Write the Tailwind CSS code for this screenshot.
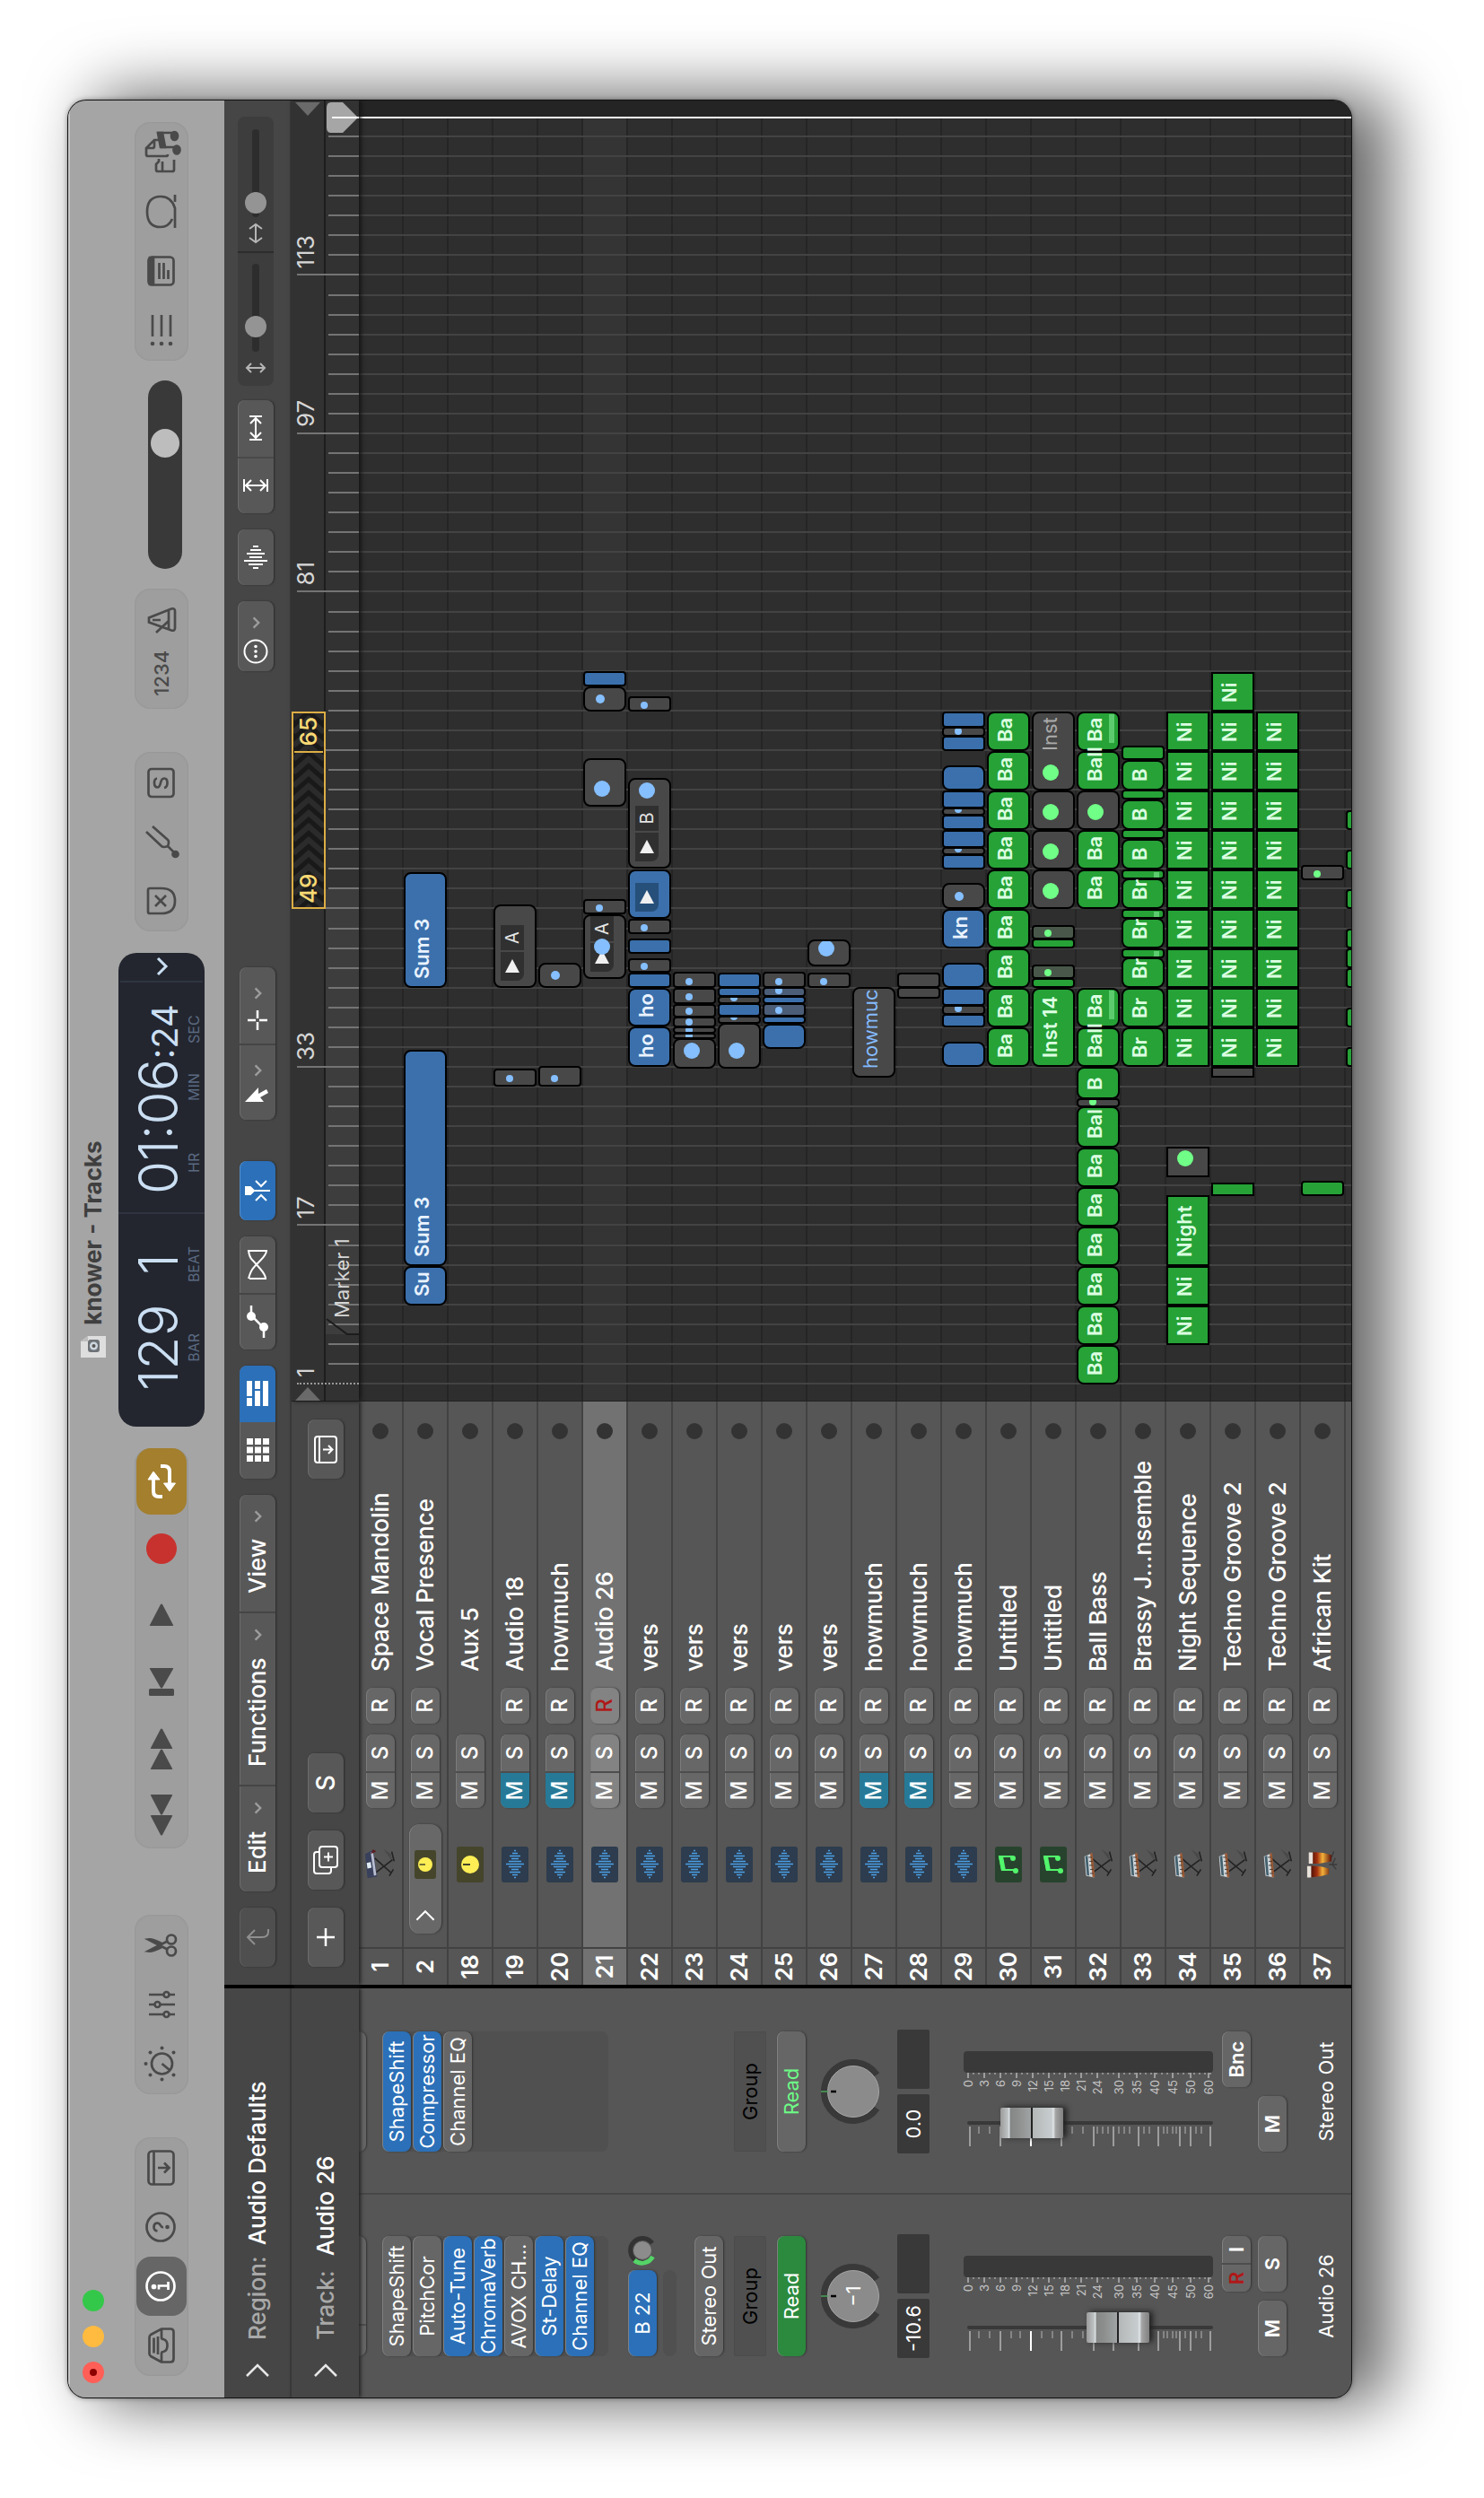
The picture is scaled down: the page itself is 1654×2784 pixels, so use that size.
<!DOCTYPE html>
<html lang="en">
<head>
<meta charset="utf-8">
<title>knower - Tracks</title>
<script src="https://cdn.jsdelivr.net/npm/@tailwindcss/browser@4"></script>
</head>
<body class="bg-white">
<svg class="hidden" aria-hidden="true">
  <defs>
    <g id="i-inbox"><path d="M1.500 20L8 8q1-1.500 3-1.500h18q2 0 3 1.500l6.500 12v10q0 3.500-3.500 3.500H5q-3.500 0-3.500-3.500zM1.500 20H11q2 0 2 2 1 4.500 7 4.500t7-4.500q0-2 2-2h9.500M10 16h20M11.500 11.500h17"/></g>
    <g id="i-info"><circle cx="20" cy="19" r="15.500"/><circle cx="19.500" cy="11.500" r="1.500" fill="currentColor"/><path d="M16.500 17H20.500V27M16 27.500h9"/></g>
    <g id="i-help"><circle cx="20" cy="19" r="15.500"/><path d="M15.500 15.500q.5-4 4.500-4t4.500 3.500q0 2.500-2.500 3.800t-2 3.200"/><circle cx="20" cy="26.500" r="1" fill="currentColor"/></g>
    <g id="i-drawer"><rect x="1.500" y="5.500" width="37" height="28" rx="4"/><path d="M2 11.500h36M20 16v12M14.500 23l5.500 5.500 5.500-5.500"/></g>
    <g id="i-dial"><circle cx="20" cy="20.500" r="11.500"/><path d="M20 20.500L13 29"/><g fill="currentColor" stroke="none"><circle cx="20" cy="2.500" r="2"/><circle cx="7.500" cy="7.500" r="2"/><circle cx="32.500" cy="7.500" r="2"/><circle cx="2.500" cy="20.500" r="2"/><circle cx="37.500" cy="20.500" r="2"/><circle cx="7.500" cy="33.500" r="2"/><circle cx="32.500" cy="33.500" r="2"/></g></g>
    <g id="i-faders"><path d="M9 6v16M9 29v6M20 6v6M20 19v16M31 6v16M31 29v6"/><circle cx="9" cy="25.500" r="3"/><circle cx="20" cy="15.500" r="3"/><circle cx="31" cy="25.500" r="3"/></g>
    <g id="i-scissors"><circle cx="13.500" cy="31" r="5"/><circle cx="26.500" cy="31" r="5"/><path d="M15.500 26.500L26.500 5q.8 5-4.500 15M24.500 26.500L13.500 5q-.8 5 4.500 15"/></g>
    <g id="i-rewind" fill="currentColor" stroke="none"><path d="M19 8q1-1 1 1v22q0 2-1 1L-2 21q-1-1 0-2zM42 8q1-1 1 1v22q0 2-1 1L21 21q-1-1 0-2z"/></g>
    <g id="i-forward" fill="currentColor" stroke="none"><path d="M21 8q-1-1-1 1v22q0 2 1 1l21-11q1-1 0-2zM-2 8q-1-1-1 1v22q0 2 1 1l21-11q1-1 0-2z"/></g>
    <g id="i-start" fill="currentColor" stroke="none"><rect x="4" y="6" width="8" height="28" rx="1.500"/><path d="M34 7q1-1 1 1v24q0 2-1 1L13 21q-1-1 0-2z"/></g>
    <g id="i-play" fill="currentColor" stroke="none"><path d="M9 7q-1-1-1 1v24q0 2 1 1l23-12q1-1 0-2z"/></g>
    <g id="i-cycle" stroke-width="4"><path d="M3 21v-4q0-6 6-6h13M37 19v4q0 6-6 6H18"/><path d="M22 5l9 6-9 7zM18 22.500v13L9 29z" fill="currentColor" stroke-width="1"/></g>
    <g id="i-replace"><path d="M6 7q0-2 2-2h24q2 0 2 2v13q0 15-14 15T6 20zM14 13l12 12M26 13L14 25"/></g>
    <g id="i-fork"><path d="M7 35l8-8q-2-5 0-7L31 3M15 27q5 2 7 0L37 10"/><circle cx="6" cy="35.500" r="3" fill="currentColor"/></g>
    <g id="i-solo"><rect x="4" y="5.500" width="31" height="28" rx="3.500"/><path d="M24.500 15q-.5-3-5-3t-5 3.200q0 2.800 5 3.800t5 4q0 3.500-5 3.500t-5.500-3.500"/></g>
    <g id="i-metro"><path d="M16.500 6h5l10 25q1 4-2.500 4H10q-3.500 0-2.500-4zM9 28h21M18 28L5 14M19 10v9"/></g>
    <g id="i-list"><path d="M13 10h24M13 20h24M13 30h24"/><g fill="currentColor" stroke="none"><circle cx="5" cy="10" r="2.300"/><circle cx="5" cy="20" r="2.300"/><circle cx="5" cy="30" r="2.300"/></g></g>
    <g id="i-note"><rect x="4.500" y="5.500" width="31" height="28" rx="4"/><path d="M5 7h30v4H5z" fill="currentColor"/><path d="M11 17.500h18M11 22.500h18M11 27.500h10"/></g>
    <g id="i-loop"><path d="M2 35h22q13-4 13-16 0-15-17-15T3 19q0 9 9 13M31 35h8"/></g>
    <g id="i-media"><path d="M12 34H1q-2 0-2-2V16q0-2 2-2h6l3 3h3M-1 21h11"/><path d="M18 27q-2 0-2-2V5q0-2 2-2h7l9 9v6M25 3v7q0 2 2 2h7"/><path d="M26 36V20l16-3v17"/><ellipse cx="23" cy="37" rx="4.500" ry="3.500" fill="currentColor"/><ellipse cx="38.500" cy="34.500" rx="4.500" ry="3.500" fill="currentColor"/><path d="M26 19l16-3v5l-16 3z" fill="currentColor"/></g>
    <g id="i-down"><path d="M13 17l7 7 7-7"/></g>
    <g id="i-right"><path d="M14 8l12 12-12 12"/></g>
    <g id="i-keys">
      <path d="M6 36l27-4 6-9-14 10z" fill="#3c3c3c" opacity=".5"/>
      <path d="M9 11l17 23M28 11L10 32M6 30l8 5M24 36l12-3" stroke="#222" stroke-width="1.800"/>
      <path d="M6 4l24-2 4 9-30 3z" fill="#cfd6da"/><path d="M7 5l23-2 1 3-25 2z" fill="#43606e"/><path d="M4 12l30-3v3L5 15z" fill="#9b5a35"/><path d="M9 9v4M14 9v4M19 8v4M24 8v4M29 7v4" stroke="#333"/>
    </g>
    <g id="i-synth">
      <path d="M6 36l27-4 6-9-14 10z" fill="#3c3c3c" opacity=".5"/>
      <path d="M9 12l17 22M28 12L10 32M6 30l8 5M24 36l12-3" stroke="#222" stroke-width="1.800"/>
      <path d="M3 3l30-3 5 10-33 5z" fill="#39405c"/><path d="M15 3l7-1 1 5-7 1z" fill="#dfe9f2"/><path d="M6 11l29-4v3L7 14z" fill="#b9bdd0"/><path d="M33 7l6 3-3 4z" fill="#5b1d22"/>
    </g>
  </defs>
</svg>

<div class="flex h-screen w-screen items-center justify-center overflow-hidden">
<div class="flex h-[100vw] w-[100vh] shrink-0 -rotate-90 bg-white px-28 pt-19 pb-37 font-['Inter','Liberation_Sans',sans-serif] text-white">
<div class="relative flex min-w-0 flex-1 flex-col overflow-hidden rounded-[20px] bg-[#565656] shadow-[0_0_0_1px_#111,0_0_6px_#0008,0_36px_72px_8px_rgba(0,0,0,0.6)]">

  <!-- title bar and control bar -->
  <header class="h-[174px] shrink-0 bg-[#a5a5a5] text-[#4a4a4a] shadow-[inset_0_2px_0_#c6c6c6]">
    <div class="relative flex h-14 items-center justify-center gap-3">
      <div class="absolute left-4 flex gap-4">
        <button aria-label="Close" class="flex size-6 items-center justify-center rounded-full bg-[#ff5f57]"><span class="size-2 rounded-full bg-[#8e0000]"></span></button>
        <button aria-label="Minimize" class="size-6 rounded-full bg-[#febb40]"></button>
        <button aria-label="Zoom" class="size-6 rounded-full bg-[#34c84a]"></button>
      </div>
      <svg class="h-7 w-6" viewBox="0 0 24 28"><path d="M0 0h18l6 8v20H0z" fill="#dedede"/><path d="M18 0v8h6z" fill="#bdbdbd"/><rect x="6" y="8" width="14" height="13" rx="3" fill="#6d7277"/><circle cx="13" cy="14.500" r="4.500" fill="#cdd6de"/><circle cx="13" cy="14.500" r="2" fill="#555"/></svg>
      <h1 class="text-[26px] leading-8 font-bold text-[#3f3f3f]">knower - Tracks</h1>
    </div>
    <div class="flex h-24 items-center gap-6 px-6">
      <div class="grid h-15 w-[266px] grid-cols-4 items-center rounded-[18px] bg-[#9e9e9e] px-px shadow-[inset_0_0_2px_#8b8b8b]" data-icons="inbox:Library,info:Inspector:on,help:Quick Help,drawer:Toolbar"></div>
      <div class="ml-6 grid h-15 w-[200px] grid-cols-3 items-center rounded-[18px] bg-[#9e9e9e] px-px shadow-[inset_0_0_2px_#8b8b8b]" data-icons="dial:Smart Controls,faders:Mixer,scissors:Editors"></div>
      <div class="ml-[50px] grid h-15 w-[446px] grid-cols-6 items-center rounded-[18px] bg-[#9e9e9e] shadow-[inset_0_0_2px_#8b8b8b]" data-icons="rewind:Rewind,forward:Forward,start:Go to Beginning,play:Play,record:Record,cycle:Cycle:gold"></div>

      <div class="flex h-24 min-w-0 flex-1 rounded-[20px] bg-[#23262f] text-[#cbdff3]">
        <div class="flex w-[239px] justify-between border-r-2 border-[#2f3440] pr-9 pl-10">
          <div class="pt-3 text-center"><div class="text-[60px] leading-[64px] font-light">129</div><div class="text-base leading-4 text-[#5b6a82]">BAR</div></div>
          <div class="pt-3 text-center"><div class="text-[60px] leading-[64px] font-light">1</div><div class="text-base leading-4 text-[#5b6a82]">BEAT</div></div>
        </div>
        <div class="min-w-0 flex-1 pt-3 pl-5">
          <div class="flex h-16 items-baseline text-[60px] leading-[64px] font-light whitespace-nowrap">01:06<span class="text-[40px] leading-none font-normal">:24</span></div>
          <div class="flex text-base leading-4 text-[#5b6a82]"><span class="w-20 pl-6">HR</span><span class="w-16 pl-6">MIN</span><span class="pl-6">SEC</span></div>
        </div>
        <button aria-label="Display mode" class="my-0.5 flex w-[33px] items-center justify-center border-l-2 border-[#2f3440]"><svg class="size-10 shrink-0 fill-none stroke-current stroke-3" viewBox="0 0 40 40"><path d="M11 16l9 9 9-9"/></svg></button>
      </div>

      <div class="grid h-15 w-[200px] grid-cols-3 items-center rounded-[18px] bg-[#9e9e9e] px-px shadow-[inset_0_0_2px_#8b8b8b]" data-icons="replace:Replace,fork:Tuner,solo:Solo"></div>
      <div class="ml-6 flex h-15 w-[134px] items-center justify-evenly rounded-[18px] bg-[#9e9e9e] shadow-[inset_0_0_2px_#8b8b8b]">
        <button class="text-[22px] font-medium">1234</button>
        <button aria-label="Metronome"><svg class="size-10 fill-none stroke-current stroke-[2.7]" viewBox="0 0 40 40"><use href="#i-metro"/></svg></button>
      </div>
      <input type="range" aria-label="Master volume" min="0" max="100" value="70" class="mt-2 -ml-0.5 h-[38px] w-[210px] appearance-none rounded-full bg-[#393939] px-0.5 [&::-webkit-slider-thumb]:size-8 [&::-webkit-slider-thumb]:appearance-none [&::-webkit-slider-thumb]:rounded-full [&::-webkit-slider-thumb]:bg-[#bdbdbd]">
      <div class="-ml-0.5 grid h-15 w-[266px] grid-cols-4 items-center rounded-[18px] bg-[#9e9e9e] px-px shadow-[inset_0_0_2px_#8b8b8b]" data-icons="list:List Editors,note:Note Pad,loop:Loop Browser,media:Browsers"></div>
    </div>
  </header>

  <div class="flex min-h-0 flex-1">
    <!-- inspector -->
    <aside class="flex w-[460px] shrink-0 flex-col border-r-4 border-black">
      <button class="flex h-[75px] shrink-0 items-center border-b-2 border-[#3b3b3b] bg-[#464646] pl-[10px] text-[26px] leading-8 font-medium">
        <svg class="size-10 fill-none stroke-[#e6e6e6] stroke-[2.5]" viewBox="0 0 40 40"><use href="#i-right"/></svg>
        <span class="ml-3.5 text-[#a9a9a9]">Region:</span><span class="ml-3">Audio Defaults</span>
      </button>
      <button class="relative z-10 flex h-[75px] shrink-0 items-center bg-[#464646] pl-[10px] text-[26px] leading-8 font-medium shadow-[0_2px_4px_#222]">
        <svg class="size-10 fill-none stroke-[#e6e6e6] stroke-[2.5]" viewBox="0 0 40 40"><use href="#i-right"/></svg>
        <span class="ml-3.5 text-[#a9a9a9]">Track:</span><span class="ml-4">Audio 26</span>
      </button>
      <div id="strips" class="grid flex-1 grid-cols-2 bg-[#565656] text-[22px] leading-7"></div>
    </aside>

    <main class="flex min-w-0 flex-1 flex-col">
      <!-- tracks menu bar -->
      <div class="flex h-[75px] shrink-0 items-center gap-[18px] border-b-2 border-[#3b3b3b] bg-[#464646] pr-[18px] pl-5 text-[26px] leading-8 font-medium">
        <button aria-label="Back" class="flex h-10 w-[66px] items-center justify-center rounded-lg bg-[#4f4f4f] text-[#8f8f8f] shadow-[inset_0_1px_0_#606060,0_1px_2px_#2a2a2a]"><svg class="size-8 fill-none stroke-current stroke-2" viewBox="0 0 32 32"><path d="M25 28h-3q-6 0-6-7V5M8 13l8-8 8 8"/></svg></button>
        <div class="flex h-10 rounded-lg bg-[#585858] shadow-[inset_0_1px_0_#6c6c6c,0_1px_2px_#2a2a2a]">
          <button class="flex w-[119px] items-center justify-between border-r-2 border-[#454545] pr-2 pl-5">Edit<svg class="size-8 fill-none stroke-[#9c9c9c] stroke-3" viewBox="0 0 40 40"><use href="#i-down"/></svg></button>
          <button class="flex w-[193px] items-center justify-between border-r-2 border-[#454545] pr-2 pl-5">Functions<svg class="size-8 fill-none stroke-[#9c9c9c] stroke-3" viewBox="0 0 40 40"><use href="#i-down"/></svg></button>
          <button class="flex w-[130px] items-center justify-between pr-2 pl-5">View<svg class="size-8 fill-none stroke-[#9c9c9c] stroke-3" viewBox="0 0 40 40"><use href="#i-down"/></svg></button>
        </div>
        <div class="flex h-10 overflow-hidden rounded-lg bg-[#585858] shadow-[inset_0_1px_0_#6c6c6c,0_1px_2px_#2a2a2a]">
          <button aria-label="Live Loops grid" class="flex w-[63px] items-center justify-center"><svg class="size-[26px] fill-white" viewBox="0 0 26 26"><path d="M0 1h7v7H0zM9.500 1h7v7h-7zM19 1h7v7h-7zM0 10h7v7H0zM9.500 10h7v7h-7zM19 10h7v7h-7zM0 19h7v7H0zM9.500 19h7v7h-7zM19 19h7v7h-7z"/></svg></button>
          <button aria-label="Tracks area" class="flex w-[63px] items-center justify-center bg-[#2b70b8]"><svg class="h-6 w-7 fill-white" viewBox="0 0 28 24"><path d="M0 0h9v6H0zM11 0h17v6H11zM0 9h17v6H0zM19 9h9v6h-9zM0 18h28v6H0z"/></svg></button>
        </div>
        <div class="flex h-10 rounded-lg bg-[#585858] shadow-[inset_0_1px_0_#6c6c6c,0_1px_2px_#2a2a2a]">
          <button aria-label="Automation" class="flex w-[63px] items-center justify-center border-r-2 border-[#454545]"><svg class="h-6 w-9" viewBox="0 0 36 24"><path d="M0 19h11L25 5h11" fill="none" stroke="#fff" stroke-width="2.500"/><circle cx="12" cy="19" r="5" fill="#fff"/><circle cx="24" cy="5" r="5" fill="#fff"/></svg></button>
          <button aria-label="Flex" class="flex w-[63px] items-center justify-center"><svg class="h-6 w-9 fill-none stroke-white stroke-2" viewBox="0 0 36 24"><path d="M2 3v18q4 0 11-6t10-9 10-4v20q-4 0-11-7T12 6 2 2"/></svg></button>
        </div>
        <button aria-label="Catch playhead" class="flex h-10 w-[66px] items-center justify-center rounded-lg bg-[#2b70b8] shadow-[inset_0_1px_0_#5590cc,0_1px_2px_#2a2a2a]"><svg class="h-7 w-8 fill-none stroke-white stroke-2" viewBox="0 0 32 28"><path d="M12 1h8v5l-4 4-4-4z" fill="#fff"/><path d="M16 9v19M5 12l6 6-6 6M27 12l-6 6 6 6"/></svg></button>
        <div class="ml-7 flex h-10 rounded-lg bg-[#585858] shadow-[inset_0_1px_0_#6c6c6c,0_1px_2px_#2a2a2a]">
          <button aria-label="Pointer tool" class="flex w-[85px] items-center justify-center gap-0.5 border-r-2 border-[#454545]"><svg class="h-7 w-6 fill-white" viewBox="0 0 24 28"><path d="M7 0v21l5-4 5 9 4-2-5-9h7z"/></svg><svg class="size-8 fill-none stroke-[#9c9c9c] stroke-3" viewBox="0 0 40 40"><use href="#i-down"/></svg></button>
          <button aria-label="Marquee tool" class="flex w-[85px] items-center justify-center gap-0.5"><svg class="size-6 fill-none stroke-white stroke-[2.500]" viewBox="0 0 24 24"><path d="M12 1v9M12 14v9M1 12h9M14 12h9"/></svg><svg class="size-8 fill-none stroke-[#9c9c9c] stroke-3" viewBox="0 0 40 40"><use href="#i-down"/></svg></button>
        </div>
        <button aria-label="Snap settings" class="-mt-1 ml-auto flex h-10 w-[78px] items-center justify-center gap-0.5 rounded-lg bg-[#585858] shadow-[inset_0_1px_0_#6c6c6c,0_1px_2px_#2a2a2a]"><svg class="size-7 fill-none stroke-white stroke-2" viewBox="0 0 28 28"><circle cx="14" cy="14" r="12.500"/><g fill="#fff" stroke="none"><circle cx="8.500" cy="14" r="1.800"/><circle cx="14" cy="14" r="1.800"/><circle cx="19.500" cy="14" r="1.800"/></g></svg><svg class="size-8 fill-none stroke-[#9c9c9c] stroke-3" viewBox="0 0 40 40"><use href="#i-down"/></svg></button>
        <button aria-label="Waveform zoom" class="-mt-1 flex h-10 w-[62px] items-center justify-center rounded-lg bg-[#585858] shadow-[inset_0_1px_0_#6c6c6c,0_1px_2px_#2a2a2a]"><svg class="h-7 w-7 fill-none stroke-white stroke-2" viewBox="0 0 28 28"><path d="M2 11v6M6 6v16M10 1v26M14 7v14M18 4v20M22 8v12M26 11v6"/></svg></button>
        <div class="-mt-1 flex h-10 rounded-lg bg-[#585858] shadow-[inset_0_1px_0_#6c6c6c,0_1px_2px_#2a2a2a]">
          <button aria-label="Fit vertically" class="flex w-[63px] items-center justify-center border-r-2 border-[#4a4a4a]"><svg class="size-7 fill-none stroke-white stroke-2" viewBox="0 0 28 28"><path d="M7 1h14M7 27h14M14 3v22M8 9l6-6 6 6M8 19l6 6 6-6"/></svg></button>
          <button aria-label="Fit horizontally" class="flex w-[63px] items-center justify-center"><svg class="size-7 fill-none stroke-white stroke-2" viewBox="0 0 28 28"><path d="M1 7v14M27 7v14M3 14h22M9 8l-6 6 6 6M19 8l6 6-6 6"/></svg></button>
        </div>
        <div class="-mt-1 -ml-0.5 flex h-10 w-[300px] rounded-lg bg-[#3d3d3d]">
          <label class="flex flex-1 items-center gap-1.5 border-r-2 border-[#2c2c2c] pr-3 pl-2"><svg aria-label="Vertical zoom" class="size-6 shrink-0 fill-none stroke-[#b5b5b5] stroke-2" viewBox="0 0 24 24"><path d="M12 2v20M7 7l5-5 5 5M7 17l5 5 5-5"/></svg><input type="range" value="22" class="h-2 w-0 flex-1 appearance-none rounded-full bg-[#2d2d2d] [&::-webkit-slider-thumb]:size-6 [&::-webkit-slider-thumb]:appearance-none [&::-webkit-slider-thumb]:rounded-full [&::-webkit-slider-thumb]:bg-[#949494]"></label>
          <label class="flex flex-1 items-center gap-1.5 pr-3.5 pl-2"><svg aria-label="Horizontal zoom" class="size-6 shrink-0 fill-none stroke-[#b5b5b5] stroke-2" viewBox="0 0 24 24"><path d="M2 12h20M7 5l-5 7 5 7M17 5l5 7-5 7"/></svg><input type="range" value="6" class="h-2 w-0 flex-1 appearance-none rounded-full bg-[#2d2d2d] [&::-webkit-slider-thumb]:size-6 [&::-webkit-slider-thumb]:appearance-none [&::-webkit-slider-thumb]:rounded-full [&::-webkit-slider-thumb]:bg-[#949494]"></label>
        </div>
      </div>

      <div class="flex min-h-0 flex-1">
        <!-- track headers -->
        <section class="flex w-[650px] shrink-0 flex-col">
          <div class="relative z-10 flex h-[75px] shrink-0 items-center gap-5 bg-[#464646] px-5 text-[28px] font-medium shadow-[0_2px_4px_#222]">
            <button aria-label="Add track" class="flex h-10 w-[66px] items-center justify-center rounded-lg bg-[#585858] shadow-[inset_0_1px_0_#6c6c6c,0_1px_2px_#2a2a2a]"><svg class="size-6 fill-none stroke-white stroke-[2.500]" viewBox="0 0 24 24"><path d="M12 2v20M2 12h20"/></svg></button>
            <button aria-label="Duplicate track" class="flex h-10 w-[66px] items-center justify-center rounded-lg bg-[#585858] shadow-[inset_0_1px_0_#6c6c6c,0_1px_2px_#2a2a2a]"><svg class="h-7 w-8 fill-none stroke-white stroke-2" viewBox="0 0 32 28"><rect x="8" y="7" width="23" height="20" rx="3"/><path d="M8 20H4q-3 0-3-3V4q0-3 3-3h18q3 0 3 3v3M19.500 12v10M14.500 17h10"/></svg></button>
            <button class="flex h-10 w-[66px] items-center justify-center rounded-lg bg-[#585858] shadow-[inset_0_1px_0_#6c6c6c,0_1px_2px_#2a2a2a]">S</button>
            <button aria-label="Global tracks" class="ml-auto flex h-10 w-[66px] items-center justify-center rounded-lg bg-[#585858] shadow-[inset_0_1px_0_#6c6c6c,0_1px_2px_#2a2a2a]"><svg class="h-7 w-8 fill-none stroke-white stroke-2" viewBox="0 0 32 28"><rect x="1" y="2" width="29" height="24" rx="3"/><path d="M1 7h29M15.500 11v10M11 17l4.500 4.500L20 17"/></svg></button>
          </div>
          <ul id="tracks" class="min-h-0 flex-1 overflow-hidden"></ul>
        </section>

        <!-- ruler and arrangement -->
        <section class="flex min-w-0 flex-1 flex-col border-l border-[#222] bg-[#2e2e2e]">
          <div class="relative z-20 h-[75px] shrink-0 bg-[#323232] text-[26px] leading-8 text-[#d6d6d6] shadow-[0_2px_5px_#111]">
            <div class="h-[38px] border-b-2 border-[#1d1d1d]"></div>
            <svg class="absolute top-1 left-0 h-7 w-4" viewBox="0 0 16 28"><path d="M0 0l15 14L0 28z" fill="#6a6a6a"/></svg>
            <svg class="absolute top-1 right-0.5 h-7 w-4" viewBox="0 0 16 28"><path d="M16 0L1 14l15 14z" fill="#6a6a6a"/></svg>
            <div id="ruler" class="absolute inset-y-0 right-[19px] left-[18px]"></div>
          </div>
          <div class="relative min-h-0 flex-1 overflow-hidden">
            <div id="rows"></div>
            <div class="absolute inset-y-0 right-0 w-[18px] bg-[#242424]"></div>
            <div id="grid" class="absolute inset-y-0 right-[19px] left-[18px]"></div>
            <div class="absolute inset-y-0 right-[18px] w-0.5 bg-white"></div>
          </div>
        </section>
      </div>
    </main>
  </div>
</div>
</div>
</div>

<script>
const $ = id => document.getElementById(id);
const pct = v => (v / 1412 * 100) + '%';

/* control bar icon groups: "icon:label:state" */
document.querySelectorAll('[data-icons]').forEach(g => {
  g.innerHTML = g.dataset.icons.split(',').map(s => {
    const [id, label, st] = s.split(':');
    const cls = st === 'on' ? 'bg-[#666] text-white' : st === 'gold' ? 'bg-[#a37f2e] text-white' : '';
    const art = id === 'record' ? '<span class="size-[34px] rounded-full bg-[#c8322e]"></span>'
      : `<svg class="size-10 overflow-visible fill-none stroke-current stroke-[2.7]" viewBox="0 0 40 40"><use href="#i-${id}"/></svg>`;
    return `<button aria-label="${label}" class="flex h-14 items-center justify-center rounded-[16px] ${cls}">${art}</button>`;
  }).join('');
});

/* track headers */
const tracks = [
  [1, 'Space Mandolin', 'synth'], [2, 'Vocal Presence', 'stack'], [18, 'Aux 5', 'aux'], [19, 'Audio 18', 'wave', 'm'], [20, 'howmuch', 'wave', 'm'],
  [21, 'Audio 26', 'wave', 'sel'], [22, 'vers', 'wave'], [23, 'vers', 'wave'], [24, 'vers', 'wave'], [25, 'vers', 'wave'], [26, 'vers', 'wave'],
  [27, 'howmuch', 'wave', 'm'], [28, 'howmuch', 'wave', 'm'], [29, 'howmuch', 'wave'], [30, 'Untitled', 'midi'], [31, 'Untitled', 'midi'],
  [32, 'Ball Bass', 'keys'], [33, 'Brassy J...nsemble', 'keys'], [34, 'Night Sequence', 'keys'], [35, 'Techno Groove 2', 'keys'],
  [36, 'Techno Groove 2', 'keys'], [37, 'African Kit', 'drum']
];
const art = {
  keys: '<svg class="h-9 w-9 fill-none" viewBox="0 0 40 38"><use href="#i-keys"/></svg>',
  synth: '<svg class="h-9 w-9 fill-none" viewBox="0 0 40 38"><use href="#i-synth"/></svg>',
  aux: '<svg class="h-[30px] w-10" viewBox="0 0 40 30"><rect width="40" height="30" rx="3" fill="#45452b"/><circle cx="20" cy="15" r="10" fill="#fdee55"/><path d="M20 7v8" stroke="#45452b" stroke-width="2"/></svg>',
  stack: '<svg class="h-6 w-8" viewBox="0 0 40 30"><rect width="40" height="30" rx="3" fill="#45452b"/><circle cx="20" cy="15" r="10" fill="#fdee55"/><path d="M20 7v8" stroke="#45452b" stroke-width="2"/></svg>',
  wave: '<svg class="h-[30px] w-10" viewBox="0 0 40 30"><rect width="40" height="30" rx="3" fill="#2d3c4e"/><path d="M5.500 14v2M8.500 12v6M11.500 9v12M14.500 11v8M17.500 8v14M20.500 5v20M23.500 8v14M26.500 11v8M29.500 9v12M32.500 12v6M35.500 14v2" stroke="#4c9fe6" stroke-width="1.500"/></svg>',
  midi: '<svg class="h-[30px] w-10" viewBox="0 0 40 30"><rect width="40" height="30" rx="3" fill="#28432d"/><path d="M14 23V8l15-3v15" fill="none" stroke="#52f56c" stroke-width="2"/><path d="M13 7l16-3v5l-16 3z" fill="#52f56c"/><circle cx="13" cy="23" r="3" fill="#52f56c"/><circle cx="27" cy="20" r="3" fill="#52f56c"/></svg>',
  drum: '<svg class="size-9" viewBox="0 0 40 40"><defs><linearGradient id="wood" x2="0" y2="1"><stop offset="0" stop-color="#3d0b06"/><stop offset=".35" stop-color="#a3300f"/><stop offset=".6" stop-color="#f3b23a"/><stop offset="1" stop-color="#5c0f08"/></linearGradient></defs><path d="M20 28v10M14 37l6-5 8 4M26 30l10 4" fill="none" stroke="#3a3a3a" stroke-width="1.500"/><path d="M4 4h14q1 12-3 24H8Q4 16 4 4zM21 6h14q1 12-3 25h-8q-3-12-3-25z" fill="url(#wood)"/><path d="M4 1h14v5H4zM21 3h14v5H21z" fill="#e8e2da"/></svg>'
};
$('tracks').innerHTML = tracks.map(([n, name, icon, st]) => {
  const sel = st === 'sel', b = sel ? 'bg-[#838383]' : 'bg-[#676767]';
  const edge = 'shadow-[inset_0_1px_0_#7d7d7d,0_1px_2px_#333]';
  const pic = icon === 'stack'
    ? `<button aria-label="Open stack" class="ml-[15px] flex h-9 w-[122px] items-center rounded-xl bg-[#686868] ${edge}"><svg class="size-8 fill-none stroke-white stroke-[2.500] ml-1" viewBox="0 0 40 40"><use href="#i-right"/></svg><span class="ml-[25px]">${art.stack}</span></button><span class="w-[18px]"></span>`
    : `<span class="ml-[72px] mr-[43px] flex w-10 justify-center">${art[icon]}</span>`;
  const rec = icon === 'aux' ? '<span class="ml-3 w-10"></span>'
    : `<button class="ml-3 h-8 w-10 rounded-lg text-2xl ${b} ${edge} ${sel ? 'text-[#b01818]' : ''}">R</button>`;
  return `<li class="flex h-[50px] items-center border-b-2 border-[#424242] text-[26px] leading-8 font-medium ${sel ? 'bg-[#727272]' : ''}">
    <span class="flex h-12 w-[42px] items-center justify-center border-r-2 border-[#424242] font-semibold">${n}</span>${pic}
    <span class="flex h-8 w-[82px] overflow-hidden rounded-lg text-2xl ${b} ${edge}"><button class="w-[41px] border-r-2 border-[#4d4d4d] ${st === 'm' ? 'bg-[#267a98]' : ''}">M</button><button class="flex-1">S</button></span>
    ${rec}
    <span class="ml-[18px] flex-1 whitespace-nowrap">${name}</span>
    <span class="mr-6 size-[18px] rounded-full bg-[#333]"></span></li>`;
}).join('');

/* ruler: 11 units a bar, 128 bars */
let r = '<div class="absolute top-[38px] h-[37px] bg-[#3d3d3d]" style="left:' + pct(56) + ';width:' + pct(496) + '"></div>';
for (let i = 0; i < 64; i++) r += `<div class="absolute top-[41px] bottom-0 w-0.5 ${i ? 'bg-[#747474]' : ''}" style="left:${i / 64 * 100}%"></div>`;
[1, 17, 33, 49, 65, 81, 97, 113].forEach((b, i) => {
  r += `<div class="absolute top-1.5 bottom-0 ${i ? 'w-0.5 bg-[#747474]' : 'border-l-2 border-dotted border-[#999]'}" style="left:${i / 8 * 100}%"></div>`;
  if (b !== 49 && b !== 65) r += `<span class="absolute top-0 pl-2" style="left:${i / 8 * 100}%">${b}</span>`;
});
r += `<div class="absolute top-0 flex h-[38px] items-center justify-between overflow-hidden border-2 border-[#dcae45] bg-[#191919] px-1 font-medium text-[#f9d974]" style="left:${pct(530)};width:${pct(220)}">
  <svg class="absolute inset-0 size-full"><defs><pattern id="chev" width="15" height="34" patternUnits="userSpaceOnUse"><path d="M-15 0L0 17-15 34M0 0l15 17L0 34M15 0l15 17-15 17" fill="none" stroke="#2b2b2b" stroke-width="6"/></pattern></defs><rect width="100%" height="100%" fill="url(#chev)"/></svg>
  <span class="relative">49</span><span class="relative flex items-center gap-1.5"><span class="h-8 w-0.5 bg-[#dcae45]"></span>65</span></div>`;
r += `<svg class="absolute top-[38px] h-[37px] w-6 fill-none stroke-[#1c1c1c] stroke-2" style="left:${pct(55)}" viewBox="0 0 24 37"><path d="M1 37V24L18 1"/></svg><span class="absolute top-[38px] text-[22px] leading-9" style="left:${pct(74)}">Marker 1</span>`;
r += '<svg class="absolute top-[39px] -right-[17px] h-9 w-[34px]" viewBox="0 0 34 36"><path d="M6 0h22q6 0 6 5v13L17 35 0 18V5q0-5 6-5z" fill="#a6a6a6"/><path d="M17 6v30" stroke="#fff" stroke-width="2"/></svg>';
$('ruler').innerHTML = r;

/* grid lines */
let rows = '';
for (let i = 0; i < 23; i++) rows += `<div class="h-[50px] border-b-2 border-[#252525] ${i === 5 ? 'bg-[#343434]' : ''}"></div>`;
$('rows').innerHTML = rows;
let g = '';
for (let i = 0; i < 64; i++) g += `<div class="absolute inset-y-0 w-0.5 bg-[#434343]" style="left:${i / 64 * 100}%"></div>`;

/* regions: lane, kind, start, width, label, dot offset, dot size, pills; units of 1/11 bar
   kinds: b blue, g grey audio, s slate, n green, k grey midi, t tinted midi */
const R = [];
const add = (lane, kind, s, w, label = '', dot = 0, size = 8, pills = '') => R.push({ lane, kind, s: s - 1241, w, label, dot, size, pills });
add(1,'b',1329,44,'Su'); add(1,'b',1373,241,'Sum 3'); add(1,'b',1683,129,'Sum 3');
add(3,'g',1573,20,'',9); add(3,'g',1683,93,'',0,8,'>A');
add(4,'g',1573,23,'',9); add(4,'g',1683,28,'',14,10);
add(5,'g',1693,72,'',36,18,'>A'); add(5,'g',1765,17,'',7); add(5,'g',1885,54,'',20,18); add(5,'g',1991,28,'',14,10); add(5,'b',2019,17);
add(6,'b',1595,45,'ho'); add(6,'b',1640,43,'ho'); add(6,'b',1683,17); add(6,'g',1700,16,'',7); add(6,'b',1721,17); add(6,'g',1743,17,'',7);
add(6,'b',1760,55,'',0,8,'>'); add(6,'g',1816,101,'',87,18,'>B'); add(6,'g',1991,17,'',7);
add(7,'g',1626,7,'',4); add(7,'g',1632,8,'',4); add(7,'g',1639,12,'',6); add(7,'g',1650,15,'',7); add(7,'g',1665,18,'',8); add(7,'g',1683,18,'',7); add(7,'g',1593,34,'',20,18);
add(8,'g',1643,9,'',8); add(8,'b',1651,15); add(8,'g',1665,9,'',7); add(8,'b',1673,11); add(8,'b',1683,17); add(8,'g',1593,51,'',20,18);
add(9,'b',1643,9); add(9,'s',1651,15,'',7); add(9,'b',1665,9); add(9,'s',1673,11,'',7); add(9,'g',1683,18,'',7); add(9,'b',1615,28);
add(10,'g',1683,17,'',7); add(10,'g',1707,30,'',20,18);
add(11,'g',1583,101,'howmuc');
add(12,'g',1671,13); add(12,'g',1683,17);
add(13,'b',1595,28); add(13,'b',1639,15); add(13,'g',1653,11,'',7); add(13,'b',1663,20); add(13,'b',1683,28); add(13,'b',1727,44,'kn'); add(13,'g',1771,29,'',14,10);
add(13,'b',1815,17); add(13,'g',1831,9,'',7); add(13,'b',1839,20); add(13,'b',1859,17); add(13,'g',1875,9,'',7); add(13,'b',1883,20); add(13,'b',1903,28); add(13,'b',1947,17); add(13,'g',1963,11,'',6); add(13,'b',1973,18);
for (let k = 0; k < 9; k++) { add(14,'n',1595+44*k,44,'Ba'); add(18,'n',1595+44*k,44,'Ni'); add(19,'n',1595+44*k,44,'Ni'); add(20,'n',1595+44*k,44,'Ni'); }
add(15,'n',1595,88,'Inst 14');
[1683,1727].forEach(s => { add(15,'n',s,11); add(15,'t',s+10,16,'',7); });
[1771,1815,1859].forEach(s => add(15,'k',s,44,'',20,18)); add(15,'k',1903,88,'Inst',20,18);
for (let k = 0; k < 6; k++) add(16,'n',1241+44*k,44,'Ba');
add(16,'n',1505,46,'Bal'); add(16,'k',1550,10,'',6); add(16,'n',1559,36,'B');
add(16,'n',1639,44,'','bar'); add(16,'n',1595,44,'Ball Ba'); add(16,'n',1771,44,'Ba'); add(16,'n',1815,44,'Ba'); add(16,'k',1859,44,'',20,18); add(16,'n',1947,44,'','bar'); add(16,'n',1903,44,'Ball Ba');
[1595,1639].forEach(s => add(17,'n',s,44,'Br'));
[1683,1727,1771].forEach(s => { add(17,'n',s+33,11,'','dot'); add(17,'n',s,34,'Br'); });
[1849,1893].forEach(s => add(17,'n',s,11)); add(17,'n',1937,16);
[1815,1859,1903].forEach(s => add(17,'n',s,34,'B'));
add(18,'n',1285,44,'Ni'); add(18,'n',1329,44,'Ni'); add(18,'n',1373,79,'Night'); add(18,'k',1472,34,'',21,18);
add(19,'n',1991,44,'Ni'); add(19,'k',1583,12); add(19,'n',1451,15);
add(21,'n',1451,17); add(21,'k',1803,17,'',7);
[1595,1639,1683,1705,1727,1771,1815,1859].forEach(s => add(22,'n',s,22));
const fill = { b: 'bg-[#3b70ac] text-[#eaf3ff]', g: 'bg-[#484848] text-[#85bbff]', s: 'bg-[#4b5d77]', n: 'bg-[#26a237] text-[#dcffe2]', k: 'bg-[#484848] text-[#aaa]', t: 'bg-[#48574a]' };
g += R.map(q => {
  const rad = q.lane >= 18 && q.lane <= 20 ? '' : q.w > 24 ? 'rounded-lg' : 'rounded-sm';
  const dotc = 'kt'.includes(q.kind) ? 'bg-[#70ff87]' : 'bg-[#85bfff]';
  const dtop = q.size === 18 ? 'top-[10px] size-[18px]' : q.size === 10 ? 'top-3 size-[10px]' : 'top-3 size-2';
  const dot = typeof q.dot === 'number' && q.dot ? `<span class="absolute ${dtop} -translate-x-1/2 rounded-full ${dotc}" style="left:${q.dot - 2}px"></span>` : '';
  const strip = q.dot === 'bar' ? '<span class="absolute right-px bottom-1 h-1.5 w-8 bg-[#5ccb6e]"></span>'
    : q.dot === 'dot' ? '<span class="absolute left-0 bottom-1 size-1.5 bg-[#5ccb6e]"></span>' : '';
  const tone = q.kind === 'b' ? 'bg-[#264f7a]' : 'bg-[#303030]';
  const pills = q.pills ? `<span class="absolute top-1.5 left-1.5 flex h-[26px] gap-0.5 text-[20px] leading-[26px] text-[#e4e4e4]"><span class="flex w-8 items-center justify-center rounded-bl-lg ${tone}"><svg class="h-4 w-4" viewBox="0 0 16 16"><path d="M1 0l15 8-15 8z" fill="#f0f0f0"/></svg></span>${q.pills[1] ? `<span class="w-7 text-center ${tone}">${q.pills[1]}</span>` : ''}</span>` : '';
  const soft = q.label === 'howmuc' || q.label === 'Inst';
  const lab = q.label ? `<span class="absolute top-1 leading-7 whitespace-nowrap ${soft ? 'font-normal' : 'font-semibold'} ${q.label === 'Inst' ? 'left-[42px]' : 'left-2'}">${q.label}</span>` : '';
  const clip = q.label ? '' : 'overflow-hidden';
  return `<div class="absolute h-12 border-2 border-black text-[22px] ${clip} ${rad} ${fill[q.kind]}" style="top:${q.lane * 50}px;left:${pct(q.s)};width:${pct(q.w)}">${strip}${pills}${dot}${lab}</div>`;
}).join('');
$('grid').innerHTML = g;

/* channel strips */
const major = [7,41,75,109,145,167,195,217,241,253,275], minor = [17,29,53,63,87,99,121,133,149,155,161,173,179,185,201,207,223,227,233,237,247,259,265];
const scale = [[0,5],[3,23],[6,41],[9,59],[12,77],[15,95],[18,113],[21,131],[24,149],[30,173],[35,193],[40,213],[45,233],[50,253],[60,273]];
const cap = '[&::-webkit-slider-thumb]:h-[70px] [&::-webkit-slider-thumb]:w-[34px] [&::-webkit-slider-thumb]:appearance-none [&::-webkit-slider-thumb]:rounded-xs [&::-webkit-slider-thumb]:bg-[linear-gradient(#9a9a9a,#c0c4c5_12%,#dfe5e8_14%,#858787_16%,#8d8f8f_28%,#a0a3a3_48%,#222_49%,#222_51%,#b4b8b8_52%,#c8cdcf_82%,#e3e9ec_84%,#a3a3a3_88%,#808080)] [&::-webkit-slider-thumb]:shadow-[1px_4px_6px_#222]';
const edge2 = 'shadow-[inset_0_1px_0_#808080,0_1px_2px_#333]';
const tone = { b: 'bg-[#2b70b8]', x: 'bg-[#666]' };
const strip = s => `<section aria-label="${s.name}" class="flex flex-col items-start pl-[46px] ${s.border}">
  <div class="flex h-2 w-[134px] rounded-b-lg bg-[#666] ${edge2}">${s.a ? '<span class="ml-[34px] border-l-2 border-[#4d4d4d]"></span>' : ''}</div>
  <div class="mt-[18px] flex h-[252px] w-[134px] flex-col gap-0.5 rounded-lg bg-[#505050]">${s.ins.map(([k, t]) => `<button class="h-8 shrink-0 rounded-lg whitespace-nowrap ${tone[k]} ${edge2}">${t}</button>`).join('')}</div>
  <div class="mt-[22px] flex h-[54px] w-[134px] justify-between">${s.a ? `<div class="flex w-24 flex-col gap-[7px]"><button class="h-8 rounded-lg bg-[#2b70b8] ${edge2}">B 22</button><span class="h-[15px] rounded-full bg-[#505050]"></span></div><svg class="size-8 overflow-visible" viewBox="0 0 32 32"><path d="M8 27A13.500 13.500 0 1 1 24 27" fill="none" stroke="#333" stroke-width="5"/><path d="M9 27.500A13.500 13.500 0 0 1 5 7" fill="none" stroke="#55d468" stroke-width="5"/><circle cx="16" cy="16" r="10" fill="#8c8c8c"/></svg>` : ''}</div>
  <div class="mt-5 h-8 w-[134px]">${s.a ? `<button class="h-8 w-full rounded-lg bg-[#666] ${edge2}">Stereo Out</button>` : ''}</div>
  <button class="mt-3 h-9 w-[134px] rounded-xs border border-[#4c4c4c] bg-[#505050] text-black">Group</button>
  <button class="mt-3 h-8 w-[134px] rounded-lg ${edge2} ${s.a ? 'bg-[#2b8a3e]' : 'bg-[#666] text-[#6dfb86]'}">Read</button>
  <div class="relative mt-[17px] ml-[31px] flex size-[72px] items-center justify-center"><svg class="absolute inset-0 size-full" viewBox="0 0 72 72"><path d="M17.500 62A32 32 0 1 1 54.500 62" fill="none" stroke="#393939" stroke-width="8"/><circle cx="36" cy="36" r="28.500" fill="#8b8b8b" stroke="#a5a5a5"/><path d="M36 0v8" stroke="#4aa35a" stroke-width="1.500"/><path d="M36 11v6" stroke="#000" stroke-width="2.500"/></svg><span class="relative">${s.pan}</span></div>
  <div class="mt-[13px] -ml-0.5 grid h-9 w-[138px] grid-cols-2 gap-1.5 leading-9"><output class="rounded-xs bg-[#393939] text-center">${s.db}</output><span class="rounded-xs bg-[#393939]"></span></div>
  <div class="relative mt-[38px] h-[278px] w-[134px]">
    ${major.map((t, i) => `<i class="absolute left-1.5 h-0.5 w-[22px] ${i === 2 ? 'bg-white' : 'bg-[#9d9d9d]'}" style="top:${t - 1}px"></i>`).join('')}
    ${minor.map(t => `<i class="absolute left-5 h-0.5 w-2 bg-[#858585]" style="top:${t - 1}px"></i>`).join('')}
    <span class="absolute top-1 left-[30px] h-[274px] w-1 rounded-full bg-[#393939]"></span>
    <input type="range" aria-label="Volume" value="${s.vol}" class="absolute top-1 left-[15px] h-[274px] w-[34px] appearance-none bg-transparent [direction:rtl] [writing-mode:vertical-lr] ${cap}">
    ${Array.from({ length: 46 }, (_, i) => `<i class="absolute left-[86px] h-0.5 w-0.5 bg-[#8f8f8f]" style="top:${4 + i * 6}px"></i>`).join('')}
    ${scale.map(([n, t]) => `<i class="absolute left-[82px] h-0.5 w-1.5 bg-[#9d9d9d]" style="top:${t - 1}px"></i><span class="absolute left-14 w-6 -translate-y-1/2 text-right text-[13px] leading-4 text-[#c4c4c4]" style="top:${t}px">${n}</span>`).join('')}
    <span class="absolute top-0 left-[88px] h-[278px] w-6 rounded-sm bg-[#393939]"></span>
  </div>
  <div class="mt-[10px] grid w-[134px] grid-cols-2 gap-x-2.5 gap-y-2 font-semibold">
    <span></span>${s.a ? `<span class="flex h-8 rounded-lg bg-[#666] ${edge2}"><button class="flex-1 border-r-2 border-[#4d4d4d] text-[#b01818]">R</button><button class="flex-1">I</button></span>` : `<button class="h-8 rounded-lg bg-[#666] ${edge2}">Bnc</button>`}
    <button class="h-8 rounded-lg bg-[#666] ${edge2}">M</button>${s.a ? `<button class="h-8 rounded-lg bg-[#666] ${edge2}">S</button>` : ''}
  </div>
  <div class="mt-[30px] w-[134px] text-center">${s.name}</div></section>`;
$('strips').innerHTML = strip({ a: 1, name: 'Audio 26', border: 'border-r-2 border-[#474747]', pan: '−1', db: '-10.6', vol: 35,
  ins: [['x','ShapeShift'],['x','PitchCor'],['b','Auto-Tune'],['b','ChromaVerb'],['x','AVOX CH...'],['b','St-Delay'],['b','Channel EQ']] })
 + strip({ name: 'Stereo Out', border: '', pan: '', db: '0.0', vol: 82, ins: [['b','ShapeShift'],['b','Compressor'],['x','Channel EQ']] });
</script>
</body>
</html>
